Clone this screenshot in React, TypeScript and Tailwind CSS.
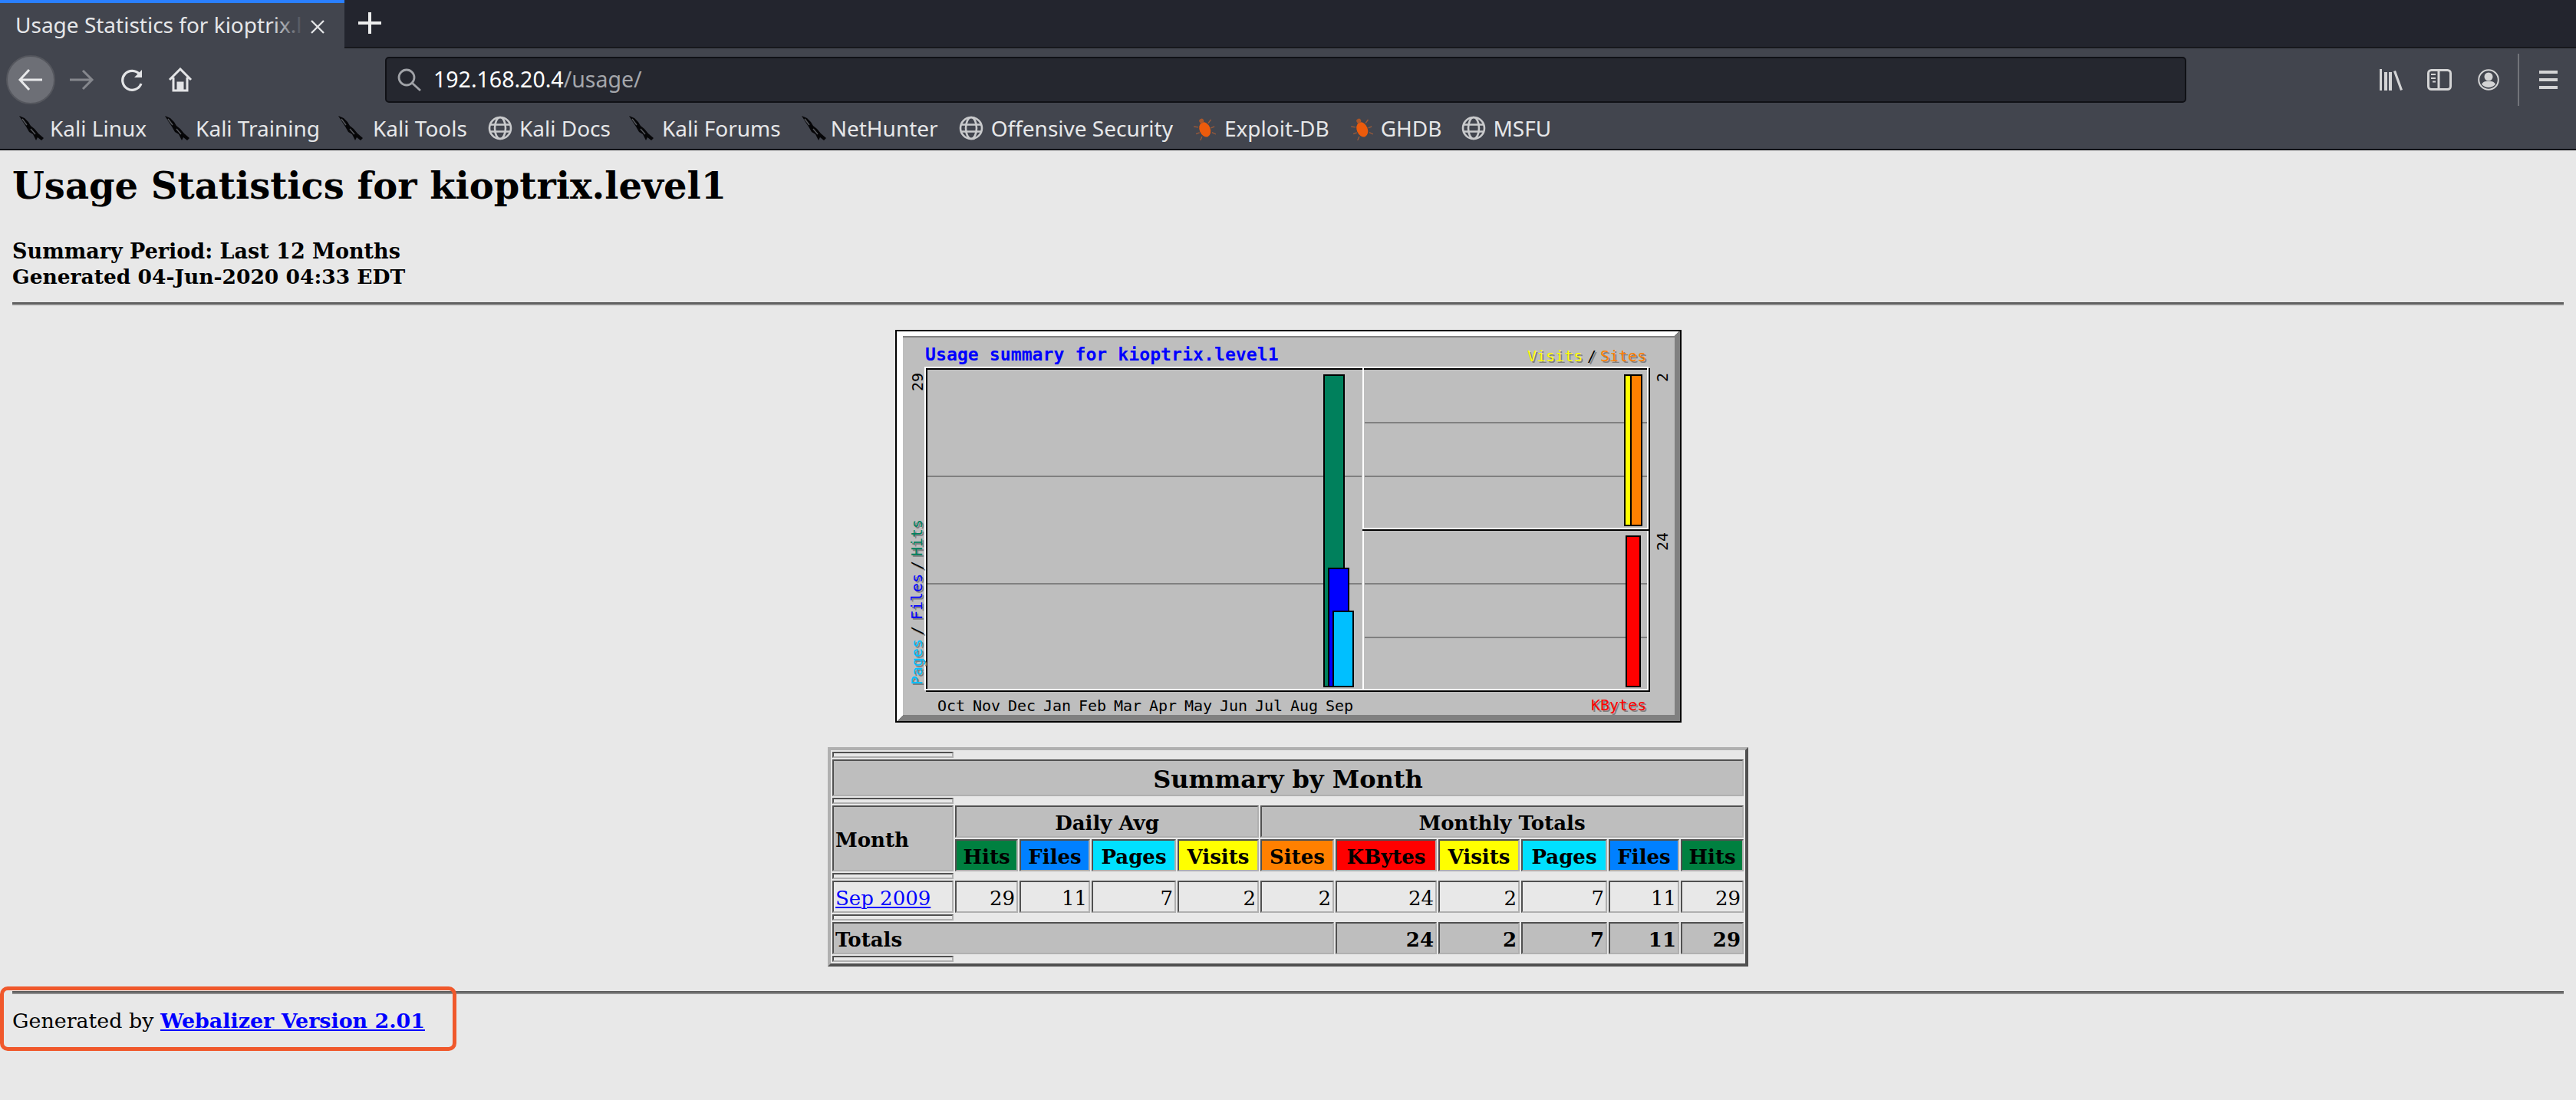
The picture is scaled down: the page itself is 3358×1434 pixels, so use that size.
import React from "react";

const serif = "font-['DejaVu_Serif',serif]";

function Kali() {
  return (
    <svg width="32" height="32" viewBox="0 0 32 32" className="shrink-0">
      <path d="M0 0 L7 3 L12 8 L15 13 L20 17 L25 23 L32 29 L29 32 L24 28 L22 32 L18 24 L13 21 L9 14 L5 8 Z" fill="#060608" />
      <path d="M4 4 L10 12 M15 17 L21 24" stroke="#55575c" strokeWidth="1.5" fill="none" />
    </svg>
  );
}

function GlobeIcon() {
  return (
    <svg width="32" height="32" viewBox="0 0 32 32" fill="none" stroke="#c9cacc" strokeWidth="2.6" className="shrink-0">
      <circle cx="16" cy="16" r="14" />
      <ellipse cx="16" cy="16" rx="7" ry="14" />
      <path d="M2.5 11.5 H29.5 M2.5 20.5 H29.5" />
    </svg>
  );
}

function Bug() {
  return (
    <svg width="30" height="32" viewBox="0 0 30 32" className="shrink-0">
      <g transform="rotate(-22 15 16)">
        <ellipse cx="15" cy="18" rx="7" ry="10" fill="#ec5b0c" />
        <circle cx="15" cy="6" r="3" fill="#a9562a" />
        <path d="M8 12 L3 9 M7 19 L2 19 M8 25 L4 29 M22 12 L27 9 M23 19 L28 19 M22 25 L26 29" stroke="#9a5a3a" strokeWidth="1.4" fill="none" />
      </g>
    </svg>
  );
}

const marks = [
  ["kali", "Kali Linux", "gap-[8px] mr-[24px]"],
  ["kali", "Kali Training", "gap-[8px] mr-[24px]"],
  ["kali", "Kali Tools", "gap-[13px] mr-[27px]"],
  ["globe", "Kali Docs", "gap-[9px] mr-[24px]"],
  ["kali", "Kali Forums", "gap-[11px] mr-[27px]"],
  ["kali", "NetHunter", "gap-[6px] mr-[27px]"],
  ["globe", "Offensive Security", "gap-[10px] mr-[26px]"],
  ["bug", "Exploit-DB", "gap-[11px] mr-[27px]"],
  ["bug", "GHDB", "gap-[10px] mr-[26px]"],
  ["globe", "MSFU", "gap-[9px] mr-[24px]"],
];

function Chrome() {
  return (
    <div className="font-['Noto_Sans',sans-serif]">
      <div className="flex h-[63px] bg-[#23252e] border-b-2 border-[#17181d]">
        <div className="relative w-[449px] h-[63px] bg-[#42454e] border-t-4 border-[#2a7fff] shrink-0 flex items-center pl-[20px] pb-[4px]">
          <span className="text-[28px] text-[#e6e7e9] whitespace-nowrap">Usage Statistics for kioptrix.l</span>
          <div className="absolute right-0 top-0 h-full w-[96px] bg-[linear-gradient(90deg,rgba(66,69,78,0),#42454e_45%)]" />
          <svg width="20" height="20" viewBox="0 0 20 20" className="absolute left-[404px] top-[21px]" stroke="#e2e3e5" strokeWidth="2.4" fill="none">
            <path d="M2 2 L18 18 M18 2 L2 18" />
          </svg>
        </div>
        <svg width="30" height="28" viewBox="0 0 30 28" className="ml-[18px] mt-[16px]" stroke="#eceded" strokeWidth="4" fill="none">
          <path d="M15 0 V28 M0 14 H30" />
        </svg>
      </div>
      <div className="flex items-center h-[71px] pt-[10px] bg-[#42454e] relative">
        <div className="ml-[8px] w-[64px] h-[64px] rounded-full bg-[#6d6f76] border-2 border-[#55575e] flex items-center justify-center shrink-0">
          <svg width="34" height="30" viewBox="0 0 34 30" fill="none" stroke="#e7e8ea" strokeWidth="3">
            <path d="M32 15 H3 M15 2 L3 15 L15 28" />
          </svg>
        </div>
        <svg width="32" height="28" viewBox="0 0 32 28" fill="none" stroke="#85878d" strokeWidth="3" className="ml-[19px] shrink-0">
          <path d="M0 14 H29 M17 2 L29 14 L17 26" />
        </svg>
        <svg width="32" height="30" viewBox="0 0 32 30" fill="none" stroke="#e3e4e6" strokeWidth="3.2" className="ml-[33px] shrink-0">
          <path d="M26 8 A12.5 12.5 0 1 0 28 20" />
          <path d="M29 2 V12 H19 Z" fill="#e3e4e6" stroke="none" />
        </svg>
        <svg width="32" height="32" viewBox="0 0 32 32" fill="none" stroke="#e3e4e6" strokeWidth="3" className="ml-[31px] shrink-0">
          <path d="M2 16 L16 2 L30 16 M7 13 V30 H25 V13" />
          <path d="M13 30 V20 H19 V30" fill="#e3e4e6" />
        </svg>
        <div className="ml-[251px] w-[2348px] h-[60px] rounded-[5px] bg-[#25272f] border-2 border-[#101116] flex items-center shrink-0">
          <svg width="32" height="30" viewBox="0 0 32 30" fill="none" stroke="#a0a2a7" strokeWidth="2.8" className="ml-[14px] shrink-0">
            <circle cx="12" cy="12" r="10" />
            <path d="M19 19 L30 29" />
          </svg>
          <span className="ml-[15px] text-[28.5px] text-white whitespace-nowrap">192.168.20.4<span className="text-[#a4a6ab]">/usage/</span></span>
        </div>
        <svg width="30" height="28" viewBox="0 0 30 28" className="absolute left-[3102px] top-[27px]" fill="#d4d4d5">
          <path d="M0 0 H3 V28 H0 Z M6 4 H10 V28 H6 Z M12 4 H16 V28 H12 Z M18 3 L21 2 L30 27 L27 28 Z" />
        </svg>
        <svg width="32" height="28" viewBox="0 0 32 28" className="absolute left-[3164px] top-[27px]" fill="none" stroke="#d4d4d5" strokeWidth="3">
          <rect x="1.5" y="1.5" width="29" height="25" rx="4" />
          <path d="M15 2 V26" />
          <path d="M5 7 H11 M5 12 H11 M7 16.5 H11" strokeWidth="2" />
        </svg>
        <svg width="28" height="28" viewBox="0 0 28 28" className="absolute left-[3230px] top-[27px]">
          <circle cx="14" cy="14" r="12.8" fill="none" stroke="#d4d4d5" strokeWidth="2" />
          <circle cx="14" cy="10" r="5.5" fill="#d4d4d5" />
          <path d="M5 20 Q7 16 11 16 H17 Q21 16 23 20 Q19 24 14 24 Q9 24 5 20 Z" fill="#d4d4d5" />
        </svg>
        <div className="absolute left-[3282px] top-[7px] w-[2px] h-[68px] bg-[#72747a]" />
        <div className="absolute left-[3310px] top-[29px] w-[24px] h-[24px] flex flex-col justify-between">
          <div className="h-[4px] bg-[#d4d4d5]" />
          <div className="h-[4px] bg-[#d4d4d5]" />
          <div className="h-[4px] bg-[#d4d4d5]" />
        </div>
      </div>
      <div className="flex items-center h-[54px] pt-[6px] bg-[#42454e] border-b-2 border-[#101116] box-content pl-[25px] text-[28px] text-[#e6e7e9] whitespace-nowrap">
        {marks.map(([k, t, c]) => (
          <div key={t} className={`flex items-center ${c}`}>
            {k === "kali" ? <Kali /> : k === "globe" ? <GlobeIcon /> : <Bug />}
            <span>{t}</span>
          </div>
        ))}
      </div>
    </div>
  );
}

function Bevel({ className = "", children, ...rest }: any) {
  return (
    <td
      {...rest}
      className={`border-2 border-t-[#505050] border-l-[#505050] border-r-[#b0b0b0] border-b-[#b0b0b0] p-0 pt-[3px] px-[2px] ${className}`}
    >
      {children}
    </td>
  );
}

function Spacer() {
  return (
    <tr>
      <td className="h-[8px] p-0 border-2 border-t-[#505050] border-l-[#505050] border-r-[#b0b0b0] border-b-[#b0b0b0]" />
    </tr>
  );
}

const widths = [158, 82, 92, 110, 106, 96, 132, 106, 112, 92, 82];

function SummaryTable() {
  const head = [
    ["Hits", "bg-[#008040]"],
    ["Files", "bg-[#0080ff]"],
    ["Pages", "bg-[#00e0ff]"],
    ["Visits", "bg-[#ffff00]"],
    ["Sites", "bg-[#ff8000]"],
    ["KBytes", "bg-[#ff0000]"],
    ["Visits", "bg-[#ffff00]"],
    ["Pages", "bg-[#00e0ff]"],
    ["Files", "bg-[#0080ff]"],
    ["Hits", "bg-[#008040]"],
  ];
  const row = [29, 11, 7, 2, 2, 24, 2, 7, 11, 29];
  const tot = [24, 2, 7, 11, 29];
  return (
    <table className="table-fixed border-separate border-spacing-[2px] border-4 border-t-[#b0b0b0] border-l-[#b0b0b0] border-r-[#505050] border-b-[#505050] w-[1200px] text-[26px] leading-[32px] text-black box-border">
      <colgroup>
        {widths.map((w, i) => (
          <col key={i} style={{ width: w }} />
        ))}
      </colgroup>
      <tbody>
        <Spacer />
        <tr>
          <Bevel colSpan={11} className="h-[48px] bg-[#bebebe] text-center font-bold text-[32px]">Summary by Month</Bevel>
        </tr>
        <Spacer />
        <tr>
          <Bevel rowSpan={2} className="bg-[#bebebe] font-bold text-left">Month</Bevel>
          <Bevel colSpan={4} className="h-[42px] bg-[#bebebe] text-center font-bold">Daily Avg</Bevel>
          <Bevel colSpan={6} className="h-[42px] bg-[#bebebe] text-center font-bold">Monthly Totals</Bevel>
        </tr>
        <tr>
          {head.map(([t, c], i) => (
            <Bevel key={i} className={`h-[42px] text-center font-bold ${c}`}>{t}</Bevel>
          ))}
        </tr>
        <Spacer />
        <tr>
          <Bevel className="h-[42px] text-left">
            <a className="text-[#0000ff] underline">Sep 2009</a>
          </Bevel>
          {row.map((n, i) => (
            <Bevel key={i} className="text-right">{n}</Bevel>
          ))}
        </tr>
        <Spacer />
        <tr>
          <Bevel colSpan={6} className="h-[42px] bg-[#bebebe] font-bold text-left">Totals</Bevel>
          {tot.map((n, i) => (
            <Bevel key={i} className="bg-[#bebebe] text-right font-bold">{n}</Bevel>
          ))}
        </tr>
        <Spacer />
      </tbody>
    </table>
  );
}

function Shadow({ x, y, color, children, rotate }: { x: number; y: number; color: string; children: string; rotate?: boolean }) {
  const tf = (dx: number, dy: number) => (rotate ? `translate(${x + dx} ${y + dy}) rotate(-90)` : `translate(${x + dx} ${y + dy})`);
  return (
    <>
      <text transform={tf(2, 2)} fill="#808080">{children}</text>
      <text transform={tf(0, 0)} fill={color}>{children}</text>
    </>
  );
}

function Chart() {
  // Coordinates are page pixels minus the image origin (1168, 430)
  const X = (v: number) => v - 1168;
  const Y = (v: number) => v - 430;
  const months = ["Oct", "Nov", "Dec", "Jan", "Feb", "Mar", "Apr", "May", "Jun", "Jul", "Aug", "Sep"];
  const bar = (x1: number, y1: number, x2: number, y2: number, fill: string) => (
    <rect x={X(x1) + 1} y={Y(y1) + 1} width={x2 - x1 - 2} height={y2 - y1 - 2} fill={fill} stroke="#000" strokeWidth="2" />
  );
  const h = (x1: number, x2: number, y: number, c: string) => <rect x={X(x1)} y={Y(y)} width={x2 - x1} height="2" fill={c} />;
  const v = (x: number, y1: number, y2: number, c: string) => <rect x={X(x)} y={Y(y1)} width="2" height={y2 - y1} fill={c} />;
  return (
    <svg width="1025" height="512" viewBox="0 0 1025 512" className="block" shapeRendering="crispEdges">
      <rect width="1025" height="512" fill="#000" />
      <rect x="2" y="2" width="1021" height="508" fill="#808080" />
      <path d="M2 2 H1021 L1015 8 H10 V502 L2 510 Z" fill="#fff" />
      <rect x="10" y="10" width="1006" height="492" fill="#bebebe" />

      {/* plots */}
      {h(1206, 2150, 478, "#fff")}
      {v(1206, 478, 900, "#fff")}
      {h(1208, 2150, 480, "#000")}
      {v(1208, 480, 900, "#000")}
      {h(1206, 2152, 898, "#fff")}
      {h(1208, 2152, 900, "#000")}
      {v(1777, 478, 900, "#fff")}
      {v(2148, 478, 900, "#fff")}
      {v(2150, 480, 902, "#000")}
      {h(1777, 2150, 688, "#fff")}
      {h(1777, 2150, 690, "#000")}

      {h(1210, 1776, 620, "#808080")}
      {h(1210, 1776, 760, "#808080")}
      {h(1780, 2148, 550, "#808080")}
      {h(1780, 2148, 620, "#808080")}
      {h(1780, 2148, 760, "#808080")}
      {h(1780, 2148, 830, "#808080")}

      {bar(1726, 488, 1754, 896, "#00805c")}
      {bar(1732, 740, 1760, 896, "#0000ff")}
      {bar(1738, 796, 1766, 896, "#00bfff")}
      {bar(2118, 488, 2128, 686, "#ffff00")}
      {bar(2126, 488, 2142, 686, "#ff8000")}
      {bar(2120, 698, 2140, 896, "#ff0000")}

      <g fontFamily="'DejaVu Sans Mono', monospace" fontSize="20" shapeRendering="auto">
        <text x={X(1207)} y={Y(470)} fill="#0000ff" fontWeight="bold" fontSize="23.2">Usage summary for kioptrix.level1</text>
        {months.map((m, i) => (
          <text key={m} x={X(1223 + 46 * i)} y={Y(927)} fill="#000">{m}</text>
        ))}
        <Shadow x={X(1992)} y={Y(471)} color="#ffff00">Visits</Shadow>
        <Shadow x={X(2070)} y={Y(471)} color="#000">/</Shadow>
        <Shadow x={X(2087)} y={Y(471)} color="#ff8000">Sites</Shadow>
        <Shadow x={X(2075)} y={Y(926)} color="#ff0000">KBytes</Shadow>
        <text transform={`translate(${X(1204)} ${Y(510)}) rotate(-90)`} fill="#000">29</text>
        <text transform={`translate(${X(2175)} ${Y(498)}) rotate(-90)`} fill="#000">2</text>
        <text transform={`translate(${X(2175)} ${Y(718)}) rotate(-90)`} fill="#000">24</text>
        <Shadow rotate x={X(1203)} y={Y(893)} color="#00bfff">Pages</Shadow>
        <Shadow rotate x={X(1203)} y={Y(828)} color="#000">/</Shadow>
        <Shadow rotate x={X(1203)} y={Y(808)} color="#0000ff">Files</Shadow>
        <Shadow rotate x={X(1203)} y={Y(743)} color="#000">/</Shadow>
        <Shadow rotate x={X(1203)} y={Y(725)} color="#00805c">Hits</Shadow>
      </g>
    </svg>
  );
}

export default function App() {
  return (
    <div className="relative h-[1434px] w-[3358px] overflow-hidden bg-[#e8e8e8]">
      <Chrome />
      <div className={`${serif} px-[16px] text-black`}>
        <h1 className="mt-[18px] text-[48px] leading-[56px] font-bold">Usage Statistics for kioptrix.level1</h1>
        <div className="mt-[41px] leading-[33px] font-bold">
          <div className="text-[27px]">Summary Period: Last 12 Months</div>
          <div className="text-[26.5px]">Generated 04-Jun-2020 04:33 EDT</div>
        </div>
        <div className="mt-[17px] h-[4px] border-t-2 border-t-[#5c5c5c] border-b-2 border-b-[#8c8c8c]" />
        <div className="mt-[32px] flex justify-center">
          <Chart />
        </div>
        <div className="mt-[32px] flex justify-center">
          <SummaryTable />
        </div>
        <div className="mt-[32px] h-[4px] border-t-2 border-t-[#5c5c5c] border-b-2 border-b-[#8c8c8c]" />
        <div className="mt-[18px] text-[26.9px] leading-[33px]">
          Generated by <a className="font-bold text-[#0000ff] underline">Webalizer Version 2.01</a>
        </div>
      </div>
      <div className="absolute left-0 top-[1286px] w-[595px] h-[84px] rounded-[10px] border-[5px] border-[#f0582b]" />
    </div>
  );
}
